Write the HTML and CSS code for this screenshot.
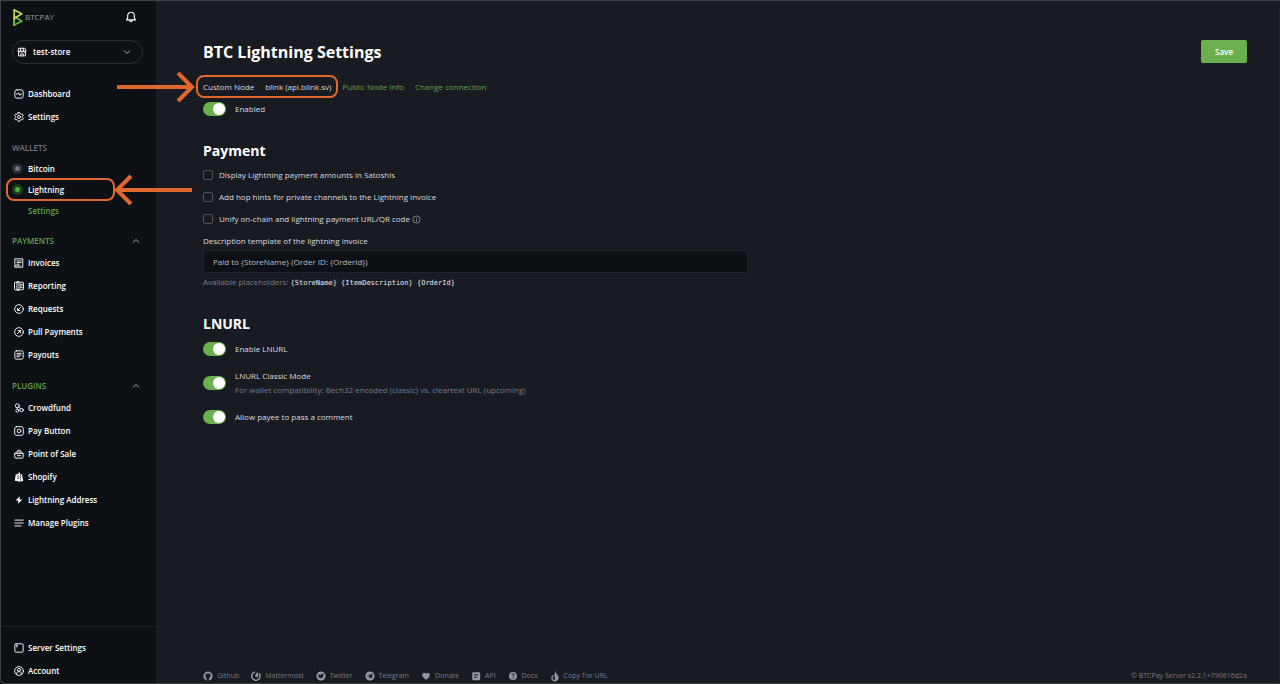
FILE: index.html
```
<!DOCTYPE html>
<html lang="en">
<head>
    <meta charset="UTF-8">
    <meta name="viewport" content="width=device-width, initial-scale=1.0">
    <title>BTC Lightning Settings</title>
    <link rel="stylesheet" href="styles.css">
</head>
<body>
    <div class="window">
        <aside class="sidebar">
            <header class="brand-bar">
                <a href="#" class="brand">
                    <svg class="brand-mark" viewBox="0 0 12 20" fill="none" stroke-width="1.8" stroke-linejoin="round" stroke-linecap="round">
                        <path d="M2 18L10 14L2 9" stroke="#5fb548"/>
                        <path d="M2 11L10 6L2 2" stroke="#c3d64a"/>
                        <path d="M2 2V18" stroke="#c3d64a"/>
                        <path d="M2 14V18" stroke="#5fb548"/>
                    </svg>
                    <span>BTCPAY</span>
                </a>
                <button class="bell" aria-label="Notifications">
                    <svg viewBox="0 0 12 12" class="line"><path d="M6 1.2a3.3 3.3 0 0 0-3.3 3.3v2.2L1.5 8.9h9L9.300 6.700V4.500A3.300 3.300 0 0 0 6 1.200zM4.700 9.200c.1 1 .6 1.500 1.300 1.500s1.200-.5 1.300-1.500"/></svg>
                </button>
            </header>

            <div class="store-picker">
                <svg viewBox="0 0 12 12" class="line store-icon"><path d="M2.500 1.500h7l1.200 2.800v.7H1.300v-.7zM4.300 1.500V5M7.700 1.500V5M1.300 5c0 1.600 2.400 1.600 3 0 .5 1.600 2.900 1.600 3.400 0 .6 1.600 3 1.600 3 0M1.900 6.500v4.200h8.200V6.500M4.500 10.500V8.200h3v2.300"/></svg>
                <select aria-label="Store">
                    <option>test-store</option>
                </select>
                <svg viewBox="0 0 8 8" class="chevron"><path d="M1 2.500L4 5.500L7 2.500"/></svg>
            </div>

            <nav class="nav">
                <a href="#" class="nav-link">
                    <svg viewBox="0 0 12 12" class="line"><rect x="1" y="1" width="10" height="10" rx="2.500"/><path d="M3 6h1.500l1-1.500L7 7.500 8 6h1"/></svg>
                    Dashboard
                </a>
                <a href="#" class="nav-link">
                    <svg viewBox="0 0 12 12" class="line"><path d="M5 .8h2l.5 1.400 1.100.6 1.500-.3 1 1.700-1 1.100v1.400l1 1.100-1 1.700-1.500-.3-1.100.6-.5 1.400H5l-.5-1.400-1.100-.6-1.500.3-1-1.700 1-1.100V5.300l-1-1.100 1-1.700 1.500.3 1.100-.6z"/><circle cx="6" cy="6" r="1.800"/></svg>
                    Settings
                </a>

                <div class="nav-title muted">WALLETS</div>
                <a href="#" class="wallet-link"><span class="dot"></span>Bitcoin</a>
                <a href="#" class="wallet-link marked">
                    <span class="dot on"></span>Lightning
                    <span class="callout callout-nav"></span>
                    <svg class="arrow arrow-left" viewBox="0 0 78 32"><path d="M78 16H4M17 2L3 16L17 30"/></svg>
                </a>
                <a href="#" class="wallet-link sub">Settings</a>

                <button class="nav-title">PAYMENTS
                    <svg viewBox="0 0 8 8" class="chevron"><path d="M1 5.500L4 2.500L7 5.500"/></svg>
                </button>
                <a href="#" class="nav-link">
                    <svg viewBox="0 0 12 12" class="line"><path d="M1.500 1h9v10h-9zM3.500 3.500h5M3.500 5.500h5M3.500 7.500h2.500M1.500 9.500h6"/></svg>
                    Invoices
                </a>
                <a href="#" class="nav-link">
                    <svg viewBox="0 0 12 12" class="line"><path d="M4 10.500H1.500A1 1 0 0 1 .6 9.500v-7a1 1 0 0 1 .9-1H4M4 .8h2v10.400H4zM6 1.500h4.500a1 1 0 0 1 .9 1v7a1 1 0 0 1-.9 1H6M7.500 4h2.300M7.500 6h2.300M7.500 8h2.300"/></svg>
                    Reporting
                </a>
                <a href="#" class="nav-link">
                    <svg viewBox="0 0 12 12" class="line"><circle cx="6" cy="6" r="5.200"/><path d="M8 4L4.300 7.700M4.200 5v2.800H7"/></svg>
                    Requests
                </a>
                <a href="#" class="nav-link">
                    <svg viewBox="0 0 12 12" class="line"><circle cx="6" cy="6" r="5.200"/><path d="M4 8l3.700-3.700M5 4.200h2.800V7"/></svg>
                    Pull Payments
                </a>
                <a href="#" class="nav-link">
                    <svg viewBox="0 0 12 12" class="line"><rect x="1" y="1" width="10" height="10" rx="2"/><path d="M3.500 4h5M3.500 6h5M3.500 8h3"/></svg>
                    Payouts
                </a>

                <button class="nav-title">PLUGINS
                    <svg viewBox="0 0 8 8" class="chevron"><path d="M1 5.500L4 2.500L7 5.500"/></svg>
                </button>
                <a href="#" class="nav-link">
                    <svg viewBox="0 0 12 12" class="line"><circle cx="4" cy="3.300" r="2.400"/><circle cx="4" cy="9.200" r="1.800"/><circle cx="9.200" cy="8.500" r="2"/><path d="M4 5.700v1.700M5.800 5l2 2"/></svg>
                    Crowdfund
                </a>
                <a href="#" class="nav-link">
                    <svg viewBox="0 0 12 12" class="line"><rect x=".8" y=".8" width="10.400" height="10.400" rx="2.500"/><circle cx="6" cy="6" r="2.200"/></svg>
                    Pay Button
                </a>
                <a href="#" class="nav-link">
                    <svg viewBox="0 0 12 12" class="line"><path d="M1 5.500h10v4.500a1 1 0 0 1-1 1H2a1 1 0 0 1-1-1zM1.200 5.300L3 3.500h6l1.800 1.800M3.800 3.500C3.800.3 8.200.3 8.200 3.500M4 8h4"/></svg>
                    Point of Sale
                </a>
                <a href="#" class="nav-link">
                    <svg viewBox="0 0 12 12"><path d="M2 3.300l2-.6C4.400 1.300 5.300.5 6.200.6c.6 0 1 .5 1.200 1.200L8 11.600 1 10.400z" fill="#fff"/><path d="M8 2l1.600 1.300L11 10.800l-2.600.7z" fill="#fff"/><path d="M6.300 4.800c-1.300-.7-2.300.3-1.900 1 .4.700 1.400.9 1.200 1.700-.1.700-1.100.6-1.900 0M4.800 2.500c.2-.8.700-1.200 1.200-1.100" fill="none" stroke="#0d1117" stroke-width=".9"/></svg>
                    Shopify
                </a>
                <a href="#" class="nav-link">
                    <svg viewBox="0 0 12 12"><path d="M7 1.500L2 6.700h3.200L4.700 10.500 10 5.300H6.600z" fill="#fff"/></svg>
                    Lightning Address
                </a>
                <a href="#" class="nav-link">
                    <svg viewBox="0 0 12 12" class="line"><path d="M1 2.500h10M1 6h10M1 9.500h7.500"/></svg>
                    Manage Plugins
                </a>
            </nav>

            <nav class="nav-bottom">
                <a href="#" class="nav-link">
                    <svg viewBox="0 0 12 12" class="line"><rect x="1" y="1" width="10" height="10" rx="1.500"/><path d="M3 3.200h1.200M3 4.500h.8"/></svg>
                    Server Settings
                </a>
                <a href="#" class="nav-link">
                    <svg viewBox="0 0 12 12" class="line"><circle cx="6" cy="6" r="5.300"/><circle cx="6" cy="4.600" r="1.900"/><path d="M3.200 10V9c0-3 5.600-3 5.600 0v1"/></svg>
                    Account
                </a>
            </nav>
        </aside>

        <main class="main">
            <form class="settings">
                <div class="title-row">
                    <h1>BTC Lightning Settings</h1>
                    <button type="submit" class="save-btn">Save</button>
                </div>

                <div class="node-row">
                    <div class="node marked">
                        <span>Custom Node</span>
                        <span>blink (api.blink.sv)</span>
                        <span class="callout callout-node"></span>
                        <svg class="arrow arrow-right" viewBox="0 0 78 32"><path d="M0 16H74M61 2L75 16L61 30"/></svg>
                    </div>
                    <a href="#">Public Node Info</a>
                    <a href="#">Change connection</a>
                </div>
                <div class="toggle-row">
                    <input type="checkbox" class="toggle" id="enabled" checked>
                    <label for="enabled">Enabled</label>
                </div>

                <h2>Payment</h2>
                <div class="check-row">
                    <input type="checkbox" class="check" id="satoshis">
                    <label for="satoshis">Display Lightning payment amounts in Satoshis</label>
                </div>
                <div class="check-row">
                    <input type="checkbox" class="check" id="hints">
                    <label for="hints">Add hop hints for private channels to the Lightning invoice</label>
                </div>
                <div class="check-row">
                    <input type="checkbox" class="check" id="unify">
                    <label for="unify">Unify on-chain and lightning payment URL/QR code</label>
                    <svg viewBox="0 0 10 10" class="info"><circle cx="5" cy="5" r="4"/><path d="M5 4.500v2.800M5 2.600v1"/></svg>
                </div>
                <div class="field">
                    <label for="template">Description template of the lightning invoice</label>
                    <input type="text" id="template" value="Paid to {StoreName} (Order ID: {OrderId})">
                    <div class="hint">Available placeholders: <code>{StoreName} {ItemDescription} {OrderId}</code></div>
                </div>

                <h2>LNURL</h2>
                <div class="toggle-row">
                    <input type="checkbox" class="toggle" id="lnurl" checked>
                    <label for="lnurl">Enable LNURL</label>
                </div>
                <div class="toggle-row">
                    <input type="checkbox" class="toggle" id="classic" checked>
                    <div>
                        <label for="classic">LNURL Classic Mode</label>
                        <div class="hint">For wallet compatibility: Bech32 encoded (classic) vs. cleartext URL (upcoming)</div>
                    </div>
                </div>
                <div class="toggle-row">
                    <input type="checkbox" class="toggle" id="comment" checked>
                    <label for="comment">Allow payee to pass a comment</label>
                </div>
            </form>

            <footer class="footer">
                <div class="footer-links">
                    <a href="#"><svg viewBox="0 0 12 12"><path d="M6 .6a5.500 5.500 0 0 0-1.700 10.700c.3 0 .4-.1.400-.3V9.900c-1.500.3-1.900-.7-2.300-1.200 1 .2 1.300.8 2.300.6.1-.4.2-.6.400-.8C2.700 8.200 2.300 4.900 3.500 4c-.1-.5-.1-1 .1-1.400.6 0 1.100.3 1.500.6h1.800c.4-.3.9-.6 1.500-.6.2.4.2.9.1 1.400 1.200.9.8 4.200-1.600 4.500.3.300.4.700.4 1.300V11c0 .2.1.3.400.3A5.500 5.500 0 0 0 6 .6z" fill="currentColor"/></svg>Github</a>
                    <a href="#"><svg viewBox="0 0 12 12"><path d="M4.800 1.200a5 5 0 1 0 4.800 1.500" fill="none" stroke="currentColor" stroke-width="1.800"/><path d="M7.700.7L8.800 5.800C8.800 8 5 8.200 5 5.800 5 4.200 7 3.200 7.700.7z" fill="currentColor"/></svg>Mattermost</a>
                    <a href="#"><svg viewBox="0 0 12 12"><circle cx="6" cy="6" r="5.500" fill="currentColor"/><path d="M2.800 3.500c1 1.100 2 1.400 3.100 1.400 0-2 2.200-2 2.700-1.300l1-.3-.7 1.300C9 8.500 5 9.600 2.700 8.200c.7 0 1.200-.1 1.700-.5-1-.3-1.300-.8-1.400-1.300-.3-.7-.5-1.800-.2-2.900z" fill="#181b22"/></svg>Twitter</a>
                    <a href="#"><svg viewBox="0 0 12 12"><circle cx="6" cy="6" r="5.500" fill="currentColor"/><path d="M2 6l7.300-2.900-1.200 6L5.800 7.500l-1 1-.3-1.700L7.500 4.500 3.700 6.600z" fill="#181b22"/></svg>Telegram</a>
                    <a href="#"><svg viewBox="0 0 12 12"><path d="M6 10.500C3 8 1.500 6.700 1.500 4.700c0-2.700 3.300-3.400 4.500-1.200 1.200-2.200 4.500-1.500 4.500 1.200C10.500 6.700 9 8 6 10.500z" fill="currentColor"/></svg>Donate</a>
                    <a href="#"><svg viewBox="0 0 12 12"><rect x="1.500" y="1.500" width="9.500" height="9.500" rx="1.200" fill="currentColor"/><path d="M3.700 4.700h5M3.700 7.500h3.500" stroke="#181b22" stroke-width="1.200"/></svg>API</a>
                    <a href="#"><svg viewBox="0 0 12 12"><circle cx="6" cy="6" r="4.800" fill="currentColor"/><path d="M4.400 4.800c.1-2 3.300-1.800 3.200 0C7.500 5.800 6 5.800 6 7M6 8v1" fill="none" stroke="#181b22" stroke-width="1.200"/></svg>Docs</a>
                    <a href="#"><svg viewBox="0 0 12 14"><path d="M7.500.5c-.8 1.500-.7 2.300.3 3.700 1 1.300 2.700 2.700 2.700 5 0 2.500-1.900 4.300-4.500 4.300S1.500 11.700 1.500 9.300c0-2.800 4-3.200 4.500-5.500C6 2.500 6.500 1.300 7.500.5z" fill="currentColor"/><path d="M5.700 5.500C5 7 3.200 7.600 3.200 9.500c0 1.600 1 2.600 2.500 2.800z" fill="#181b22"/></svg>Copy Tor URL</a>
                </div>
                <div>© BTCPay Server v2.2.1+790616d2a</div>
            </footer>
        </main>
    </div>
</body>
</html>
```

FILE: styles.css
```
* {
    margin: 0;
    padding: 0;
    box-sizing: border-box;
}

body {
    background: #181b22;
    color: #d8dbe0;
    font-family: 'Open Sans', 'Noto Sans', sans-serif;
    font-size: 8px;
    line-height: 12px;
}

a {
    color: #5fa348;
    text-decoration: none;
}

button, input, select {
    font: inherit;
    color: inherit;
    border: none;
    background: none;
}

button, select, .toggle, .check {
    cursor: pointer;
}

.window {
    display: flex;
    min-height: 100vh;
    border: 1px solid #3f4247;
    border-right-color: #20232a;
    border-bottom-left-radius: 6px;
    overflow: hidden;
}

.line {
    fill: none;
    stroke: currentColor;
    stroke-width: 1.1;
    stroke-linejoin: round;
    stroke-linecap: round;
}

.chevron {
    width: 8px;
    height: 8px;
    fill: none;
    stroke: #a8adb5;
    stroke-width: 1;
}

/* Sidebar */
.sidebar {
    width: 156px;
    flex-shrink: 0;
    display: flex;
    flex-direction: column;
    background: #0d1015;
    border-right: 1px solid #1d2026;
    color: #fff;
}

.brand-bar {
    display: flex;
    align-items: center;
    justify-content: space-between;
    padding: 6px 19px 0 11px;
    height: 26px;
}

.brand {
    display: flex;
    align-items: center;
    gap: 1px;
    color: #9a9da2;
}

.brand-mark {
    width: 12px;
    height: 19px;
}

.bell {
    width: 12px;
    height: 12px;
}

.bell svg {
    display: block;
}

.store-picker {
    position: relative;
    margin: 13px 13px 18px 11px;
}

.store-picker select {
    width: 100%;
    height: 24px;
    padding: 0 20px;
    border: 1px solid #2b2f36;
    border-radius: 12px;
    appearance: none;
    font-weight: 600;
}

.store-picker svg {
    position: absolute;
    pointer-events: none;
}

.store-icon {
    left: 5px;
    top: 7px;
    width: 10px;
    height: 10px;
}

.store-picker .chevron {
    right: 12px;
    top: 8px;
}

.nav {
    display: flex;
    flex-direction: column;
    padding: 0 16px 0 11px;
}

.nav-link {
    display: flex;
    align-items: center;
    gap: 4px;
    height: 23px;
    padding-left: 2px;
    color: #fff;
    font-weight: 600;
}

.nav-link svg {
    width: 10px;
    height: 10px;
}

.nav-title {
    display: flex;
    justify-content: space-between;
    align-items: center;
    margin: 14px 0 4px;
    color: #5fa348;
    font-weight: 600;
}

.nav-title.muted {
    color: #70757e;
}

.wallet-link {
    display: flex;
    align-items: center;
    gap: 5px;
    height: 21px;
    color: #fff;
    font-weight: 600;
}

.wallet-link.sub {
    padding-left: 16px;
    color: #5fa348;
}

.dot {
    width: 11px;
    height: 11px;
    border: 3px solid #292c33;
    border-radius: 50%;
    background: #70757e;
}

.dot.on {
    border-color: #1c3a1e;
    background: #51b13e;
}

.nav-bottom {
    margin-top: auto;
    padding: 9px 11px 1px;
    border-top: 1px solid #1d2026;
}

/* Highlight frames and arrows */
.marked {
    position: relative;
}

.callout {
    position: absolute;
    border: 2px solid #e0682f;
    border-radius: 8px;
    pointer-events: none;
}

.callout-nav {
    inset: -1px 25px -1px -6px;
}

.callout-node {
    inset: -6px -7px -5px;
}

.arrow {
    position: absolute;
    z-index: 2;
    width: 78px;
    height: 32px;
    fill: none;
    stroke: #e0682f;
    stroke-width: 4;
    pointer-events: none;
}

.arrow-left {
    left: 102px;
    top: -5px;
}

.arrow-right {
    right: calc(100% + 8px);
    top: -10px;
}

/* Main */
.main {
    flex: 1;
    display: flex;
    flex-direction: column;
    justify-content: space-between;
    padding: 39px 32px 1px 46px;
}

.title-row {
    display: flex;
    justify-content: space-between;
    align-items: center;
    margin-bottom: 18px;
}

h1 {
    color: #fff;
    font-size: 16px;
    line-height: 22px;
}

h2 {
    margin: 25px 0 8px;
    color: #fff;
    font-size: 14px;
    line-height: 20px;
}

.save-btn {
    height: 23px;
    padding: 0 14px;
    border-radius: 2px;
    background: #6bb04f;
    color: #fff;
    font-weight: 600;
}

.node-row, .node {
    display: flex;
    gap: 11px;
}

.node-row {
    margin-bottom: 9px;
}

.toggle-row {
    display: flex;
    align-items: center;
    gap: 9px;
    line-height: 14px;
}

.toggle-row + .toggle-row {
    margin-top: 13px;
}

.toggle {
    display: flex;
    align-items: center;
    justify-content: flex-end;
    width: 23px;
    height: 14px;
    padding: 1px;
    border-radius: 7px;
    background: #6bb04f;
    appearance: none;
}

.toggle::before {
    content: '';
    width: 12px;
    height: 12px;
    border-radius: 50%;
    background: #fff;
}

.toggle:not(:checked) {
    justify-content: flex-start;
    background: #3d4149;
}

.check-row {
    display: flex;
    align-items: center;
    margin-bottom: 10px;
}

.check {
    width: 10px;
    height: 10px;
    margin-right: 6px;
    border: 1px solid #50545c;
    border-radius: 2px;
    appearance: none;
}

.check:checked {
    background: #6bb04f;
}

.info {
    width: 9px;
    height: 9px;
    margin-left: 2px;
    fill: none;
    stroke: #8b9098;
}

.field {
    display: flex;
    flex-direction: column;
    max-width: 545px;
}

.field input {
    height: 23px;
    margin: 3px 0;
    padding: 0 9px;
    border: 1px solid #20242b;
    background: #0d1015;
    color: #b9bdc4;
}

.hint {
    color: #787d87;
}

.hint code {
    color: #e8eaed;
    font-family: 'DejaVu Sans Mono', monospace;
    font-size: 7px;
}

.footer, .footer-links, .footer a {
    display: flex;
    align-items: center;
}

.footer {
    justify-content: space-between;
    color: #787d87;
    font-size: 7px;
}

.footer-links {
    gap: 12px;
}

.footer a {
    gap: 4px;
    color: #787d87;
}

.footer svg {
    width: 10px;
    height: 12px;
    color: #9297a0;
}
```
